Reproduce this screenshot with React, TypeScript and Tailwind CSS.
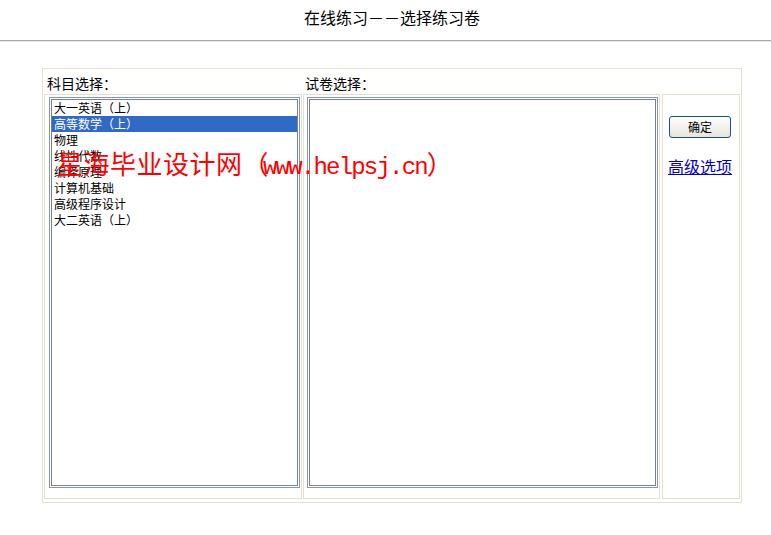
import React from "react";

const subjects = [
  "大一英语（上）",
  "高等数学（上）",
  "物理",
  "线性代数",
  "编译原理",
  "计算机基础",
  "高级程序设计",
  "大二英语（上）",
];

const cjk = { fontFamily: '"Noto Sans CJK SC", "Noto Sans", sans-serif' };

export default function App() {
  return (
    <div className="relative w-[771px] h-[535px] bg-white text-black" style={cjk}>
      <div className="h-[40px] flex justify-center pt-[9px] pl-[13px] text-[16px] leading-[16px]">
        在线练习－－选择练习卷
      </div>
      <div className="h-[1px] bg-[#a9a9a1]" />
      <div className="h-[1px] bg-[#ececE6]" />

      <div className="ml-[42px] mt-[26px] w-[700px] h-[435px] border border-[#e4e1d2] p-[1px] flex flex-col">
        <div className="h-[24px] flex text-[14px] leading-[16px]">
          <div className="w-[258px] pl-[3px] pt-[5px]">科目选择：</div>
          <div className="pl-[3px] pt-[5px]">试卷选择：</div>
        </div>
        <div className="h-[405px] flex">
          <div className="w-[258px] h-full border border-[#e4e1d2] pl-[4px] pt-[2px]">
            <div className="w-[251px] h-[391px] border border-[#8b97a3] p-[2px] bg-white shadow-[inset_0_0_0_1px_#ffffff,inset_0_0_0_2px_#75828f]">
              <div className="flex flex-col text-[12px] leading-[16px]">
                {subjects.map((s, i) => (
                  <div
                    key={s + i}
                    className={
                      i === 1
                        ? "h-[16px] pl-[2px] bg-[#316ac5] text-white"
                        : "h-[16px] pl-[2px]"
                    }
                  >
                    {s}
                  </div>
                ))}
              </div>
            </div>
          </div>
          <div className="ml-[1px] w-[357px] h-full border border-[#e4e1d2] pl-[3px] pt-[2px]">
            <div className="w-[351px] h-[391px] border border-[#8b97a3] p-[2px] bg-white shadow-[inset_0_0_0_1px_#ffffff,inset_0_0_0_2px_#75828f]" />
          </div>
          <div className="ml-[2px] w-[78px] h-full border border-[#e4e1d2] flex flex-col items-start pl-[6px] pt-[21px]">
            <button className="w-[62px] h-[22px] rounded-[3px] border border-[#1c4f80] bg-gradient-to-b from-white to-[#e6e4dc] text-[12px] leading-[20px] text-black flex items-center justify-center">
              确定
            </button>
            <a href="#" className="mt-[19px] -ml-[1px] text-[16px] leading-[18px] text-[#0000cc] underline">
              高级选项
            </a>
          </div>
        </div>
      </div>

      <div className="absolute left-[57px] top-[150px] flex items-baseline text-[#ff0000] whitespace-nowrap leading-none pointer-events-none">
        <span className="text-[26px] tracking-[0.5px]" style={cjk}>星海毕业设计网（</span>
        <span
          className="text-[24px] tracking-[-1.8px] -ml-[6px]"
          style={{ fontFamily: '"Liberation Mono", monospace' }}
        >
          www.helpsj.cn
        </span>
        <span className="text-[26px]" style={cjk}>）</span>
      </div>
    </div>
  );
}
